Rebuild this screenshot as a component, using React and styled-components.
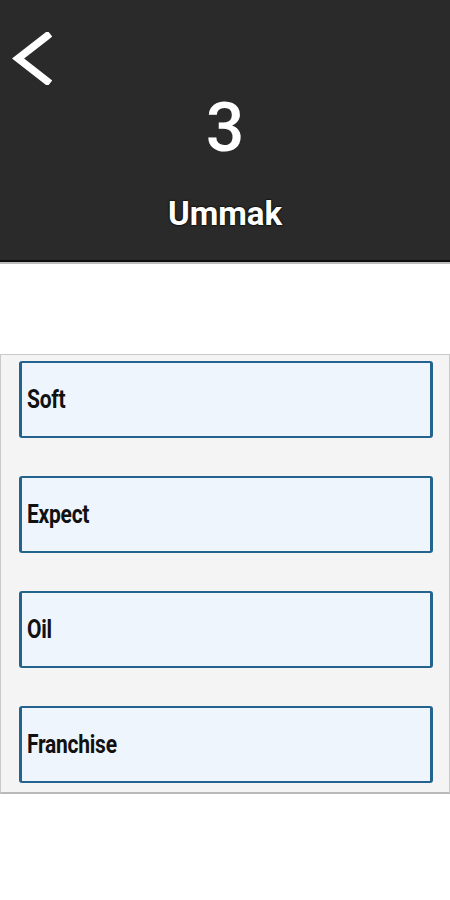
import React from "react"
import styled, { createGlobalStyle } from "styled-components"

const GlobalStyle = createGlobalStyle`
  html, body {
    margin: 0;
    padding: 0;
    background: #fff;
    font-family: Roboto, "Liberation Sans", sans-serif;
  }
`

const options = ["Soft", "Expect", "Oil", "Franchise"]

function App() {
  return (
    <>
      <GlobalStyle />
      <Header>
        <BackButton aria-label="Back">
          <svg width="40" height="53" viewBox="0 0 40 53">
            <polyline
              points="35,4 6,26.5 35,49"
              fill="none"
              stroke="#fff"
              strokeWidth="7.5"
              strokeLinecap="square"
            />
          </svg>
        </BackButton>
        <Count>3</Count>
        <Title>Ummak</Title>
      </Header>

      <Panel>
        {options.map((o) => (
          <Option key={o}>
            <Label>{o}</Label>
          </Option>
        ))}
      </Panel>
    </>
  )
}

export default App

const Header = styled.header`
  background: #2a2a2a;
  height: 262px;
  box-sizing: border-box;
  padding-top: 32px;
  display: flex;
  flex-direction: column;
  align-items: center;
  border-bottom: 2px solid #0e0e0e;
  box-shadow: 0 2px 0 #bdbdbd;
`

const BackButton = styled.button`
  align-self: flex-start;
  margin-left: 12px;
  padding: 0;
  border: 0;
  background: transparent;
  height: 53px;
  display: flex;
`

const Count = styled.div`
  margin-top: 9px;
  color: #fff;
  font-family: Roboto, sans-serif;
  font-size: 68px;
  line-height: 1;
  font-weight: 500;
`

const Title = styled.h1`
  margin: 35px 0 0;
  color: #fff;
  font-family: Roboto, sans-serif;
  font-size: 33px;
  line-height: 1;
  font-weight: 700;
  text-shadow: 0 0 2px #000, 0 0 2px #000;
`

const Panel = styled.div`
  margin-top: 92px;
  width: 450px;
  box-sizing: border-box;
  background: #f4f4f4;
  border: 1px solid #c9c9c9;
  border-bottom: 2px solid #b9b9b9;
  padding: 6px 16px 9px 18px;
  display: flex;
  flex-direction: column;
  gap: 38px;
`

const Option = styled.button`
  height: 77px;
  box-sizing: border-box;
  background: #eff5fc;
  border: 2px solid #25638f;
  border-left-width: 3px;
  border-right-width: 3px;
  border-radius: 3px;
  padding: 0 0 0 5px;
  text-align: left;
  color: #111;
`

const Label = styled.span`
  display: inline-block;
  font-family: Roboto, sans-serif;
  font-weight: 700;
  font-size: 25px;
  letter-spacing: -0.3px;
  transform: scaleX(0.84);
  transform-origin: left center;
`
